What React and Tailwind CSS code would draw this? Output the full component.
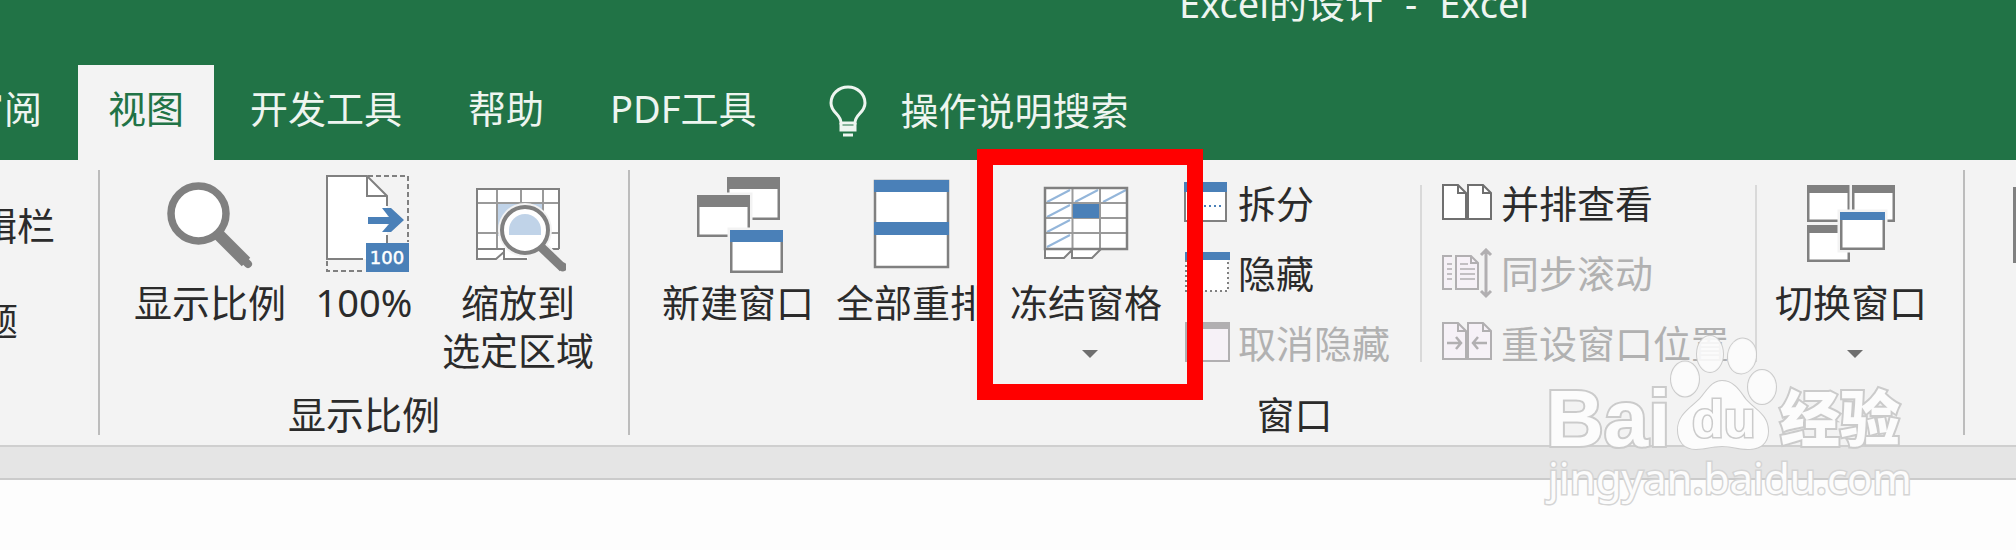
import React from 'react';

const GRAY = '#808080';
const BLUE = '#4a80b8';
const LIGHT = '#b1afb1';

// small window used in several of the ribbon icons
const Win = ({ x, y, w, h, head = 12, color = GRAY, line = 2.5 }) => (
  <g>
    <rect x={x - 2.5} y={y - 2.5} width={w + 5} height={h + 5} fill="#f3f3f3" />
    <rect x={x + line / 2} y={y + line / 2} width={w - line} height={h - line} fill="#fff" stroke={GRAY} strokeWidth={line} />
    <rect x={x} y={y} width={w} height={head} fill={color} />
  </g>
);

const BigIcon = ({ children }) => (
  <svg viewBox="0 0 96 108" className="h-[108px] w-24" fill="none" aria-hidden="true">{children}</svg>
);

const SmallIcon = ({ children, className = 'w-[46px]' }) => (
  <svg viewBox={className === 'w-[46px]' ? '0 0 46 54' : '0 0 52 54'} className={`h-[54px] shrink-0 ${className}`} fill="none" aria-hidden="true">
    {children}
  </svg>
);

const ZoomIcon = () => (
  <BigIcon>
    <path d="M56 64 84 92" stroke={GRAY} strokeWidth="12" />
    <path d="M80 88 86 94" stroke={GRAY} strokeWidth="8" strokeLinecap="round" />
    <circle cx="36.5" cy="43.5" r="27.5" fill="#fff" stroke={GRAY} strokeWidth="7.5" />
  </BigIcon>
);

const HundredIcon = () => (
  <BigIcon>
    <path d="M52 6H92V72M11 91V101H46" stroke={GRAY} strokeWidth="2" strokeDasharray="5 3" />
    <path d="M11 6H51L71 26V89H11Z" fill="#fff" />
    <path d="M47 89H11V6H51L71 26V36M71 65V73" stroke={GRAY} strokeWidth="2" />
    <path d="M51 6V26H71" stroke={GRAY} strokeWidth="2" />
    <path d="M52 47H73L66 38H75L88 50 75 62H66L73 54H52Z" fill={BLUE} />
    <rect x="50" y="73" width="43" height="29" fill={BLUE} />
    <text x="71" y="94" textAnchor="middle" fill="#fff" fontFamily="'DejaVu Sans', sans-serif" fontSize="18" stroke="#fff" strokeWidth="0.5">100</text>
  </BigIcon>
);

const ZoomSelectionIcon = () => (
  <BigIcon>
    <path d="M7 19H89V79H58V89H7Z" fill="#fff" />
    <path d="M27 34H72V66H27Z" fill="#c0d3e8" />
    <path d="M27 19V79M51 19V34M73 19V42M7 33H89M7 63H34M80 63H89" stroke="#9a9a9a" strokeWidth="2" />
    <path d="M89 79V19H7V89H26L34 82V79H7M34 82V89H57" stroke={GRAY} strokeWidth="2" />
    <path d="M89 79H82" stroke={GRAY} strokeWidth="2" />
    <path d="M71 77 93 98" stroke="#f3f3f3" strokeWidth="13" />
    <circle cx="55" cy="60" r="27" fill="#f3f3f3" />
    <circle cx="55" cy="60" r="23" fill="#fff" stroke={GRAY} strokeWidth="4" />
    <path d="M39 65V60a16 16 0 0 1 32 0v5Z" fill="#c0d3e8" />
    <path d="M71 77 93 98" stroke={GRAY} strokeWidth="9" />
    <circle cx="93" cy="97" r="4.5" fill={GRAY} />
  </BigIcon>
);

const NewWindowIcon = () => (
  <BigIcon>
    <Win x={37} y={7} w={53} h={43} />
    <Win x={7} y={25} w={53} h={42} />
    <Win x={40} y={60} w={53} h={43} color={BLUE} />
  </BigIcon>
);

const ArrangeIcon = () => (
  <BigIcon>
    <rect x="11" y="11" width="73" height="86" fill="#fff" stroke={GRAY} strokeWidth="2.5" />
    <path d="M10 10H85V22H10ZM10 52H85V65H10Z" fill={BLUE} />
  </BigIcon>
);

const FreezeIcon = () => (
  <BigIcon>
    <path d="M7 18H89V79H7Z" fill="#fff" />
    <path d="M7 79V88H26L34 80V88H54L63 79" fill="#fff" stroke={GRAY} strokeWidth="2" />
    <path d="M9 32 32 20M37 32 60 20M65 32 88 20M9 47 32 35M9 62 32 50M9 77 32 65" stroke="#94b6da" strokeWidth="2" />
    <path d="M34.5 18V79M62 18V79M7 33H89M7 48H89M7 63H89" stroke="#9a9a9a" strokeWidth="2" />
    <rect x="35" y="34" width="26" height="14" fill={BLUE} />
    <rect x="7" y="18" width="82" height="61" stroke={GRAY} strokeWidth="2.5" />
  </BigIcon>
);

const SwitchIcon = () => (
  <BigIcon>
    <Win x={4} y={15} w={43} h={37} head={8} />
    <Win x={49} y={15} w={43} h={37} head={8} />
    <Win x={4} y={55} w={43} h={37} head={8} />
    <Win x={37} y={42} w={45} h={38} head={8} color={BLUE} />
  </BigIcon>
);

const SplitIcon = () => (
  <SmallIcon>
    <rect x="1" y="5" width="41" height="38" fill="#fff" stroke={GRAY} strokeWidth="2" />
    <rect y="4" width="43" height="10" fill={BLUE} />
    <path d="M5 28H39" stroke={BLUE} strokeWidth="2" strokeDasharray="2 3" />
  </SmallIcon>
);

const HideIcon = () => (
  <SmallIcon>
    <rect x="2" y="6" width="42" height="37" fill="#fff" stroke={GRAY} strokeWidth="2" strokeDasharray="2 3" />
    <rect x="1" y="4" width="45" height="8" fill={BLUE} />
  </SmallIcon>
);

const UnhideIcon = () => (
  <SmallIcon>
    <rect x="2" y="5" width="43" height="38" fill="#f6f1f7" stroke={LIGHT} strokeWidth="2" />
    <rect x="1" y="4" width="45" height="7" fill={LIGHT} />
  </SmallIcon>
);

const SideBySideIcon = () => (
  <SmallIcon className="w-[52px]">
    <path d="M2 7H17L25 15V41H2ZM27 7H42L50 15V41H27Z" fill="#fff" stroke="#6f6f6f" strokeWidth="2" />
    <path d="M17 7V15H25M42 7V15H50" stroke="#6f6f6f" strokeWidth="2" />
  </SmallIcon>
);

const SyncScrollIcon = () => (
  <SmallIcon className="w-[52px]">
    <path d="M11 8H2V41H11M15 8H30L37 15V41H15Z" fill="#f6f1f7" stroke={LIGHT} strokeWidth="2" />
    <path d="M30 8V15H37" stroke={LIGHT} strokeWidth="2" />
    <path d="M6 16H11M6 21H11M6 26H11M6 31H11M19 16H27M19 21H34M19 26H34M19 31H34" stroke={LIGHT} strokeWidth="1.5" />
    <path d="M45 2V48M40 7 45 2 50 7M40 43 45 48 50 43" stroke={LIGHT} strokeWidth="3" />
  </SmallIcon>
);

const ResetIcon = () => (
  <SmallIcon className="w-[52px]">
    <path d="M2 5H17L25 13V41H2ZM27 5H42L50 13V41H27Z" fill="#f6f1f7" stroke={LIGHT} strokeWidth="2" />
    <path d="M17 5V13H25M42 5V13H50" stroke={LIGHT} strokeWidth="2" />
    <path d="M6 25H20M15 19 20 25 15 31M46 25H32M37 19 32 25 37 31" stroke={LIGHT} strokeWidth="2.5" />
  </SmallIcon>
);

const Bulb = () => (
  <svg viewBox="0 0 38 52" className="h-[52px] w-[38px]" fill="none" stroke="#eef5f0" strokeWidth="3" aria-hidden="true">
    <path d="M12 38C12 29 2 28 2 18a17 16 0 0 1 34 0C36 28 26 29 26 38Z" />
    <path d="M12 38V45H26V38M12 42H26M14 50H24" />
  </svg>
);

const BigButton = ({ icon, lines, arrow, className = 'w-[152px]' }) => (
  <button type="button" className={`flex shrink-0 flex-col items-center whitespace-nowrap ${className}`}>
    {icon}
    {lines.map((line) => (
      <span key={line} className="leading-[48px]">{line}</span>
    ))}
    {arrow && <span className="mt-6 ml-2 border-x-8 border-t-8 border-x-transparent border-t-[#6e6e6e]" />}
  </button>
);

const SmallButton = ({ icon, label, disabled }) => (
  <button type="button" disabled={disabled} className="flex h-[70px] items-center gap-2 whitespace-nowrap disabled:text-[#b1b1b1]">
    {icon}
    <span className="pb-1 leading-[48px]">{label}</span>
  </button>
);

const GroupLine = () => <div className="mb-[5px] w-[2px] shrink-0 bg-[#bcbcbc]" />;
const InnerLine = ({ className }) => <div className={`mt-[15px] h-[177px] w-[2px] shrink-0 bg-[#d9d9d9] ${className}`} />;

const tabs = ['审阅', '视图', '开发工具', '帮助', 'PDF工具'];

const Watermark = () => (
  <svg viewBox="0 0 380 180" className="pointer-events-none absolute top-[330px] right-[96px] h-[180px] w-[380px]" fill="#fcfcfc" stroke="#cbcbcb" strokeWidth="2" paintOrder="stroke" aria-hidden="true">
    <text x="6" y="116" fontSize="80" fontFamily="'Liberation Sans', Arial, sans-serif" fontWeight="700" strokeWidth="4">Bai</text>
    <g strokeWidth="2" fillOpacity="0.9">
      <ellipse cx="145" cy="49" rx="14" ry="17.5" />
      <ellipse cx="170" cy="24" rx="13" ry="18" />
      <ellipse cx="202" cy="26" rx="14" ry="17.5" transform="rotate(8 202 26)" />
      <ellipse cx="222" cy="57" rx="14" ry="17" />
    </g>
    <path d="M182 51c12 0 18 11 24 19 9 10 22 15 22 31 0 13-9 18-20 18-10 0-16-3-26-3s-17 3-26 3c-12 0-18-8-18-19 0-15 12-21 22-31 7-8 12-18 22-18Z" />
    <text x="152" y="107" fontSize="52" fontFamily="'Liberation Sans', Arial, sans-serif" fontWeight="700" strokeWidth="3">du</text>
    <text x="240" y="111" fontSize="60" fontFamily="'Noto Sans CJK SC', sans-serif" fontWeight="900" strokeWidth="4">经验</text>
    <text x="8" y="164" fontSize="42" fontFamily="'Noto Sans', sans-serif" strokeWidth="3" stroke="#d4d4d4">jingyan.baidu.com</text>
  </svg>
);

const App = () => {
  return (
    <div className="relative min-h-screen overflow-hidden bg-[#fdfdfd] font-['Noto_Sans','Noto_Sans_CJK_SC',sans-serif] text-[38px] text-[#2b2b2b]">
      <header className="flex h-[160px] flex-col justify-between bg-[#217346] text-[#eef5f0]">
        <div className="-mt-[21px] flex gap-[22px] pl-[1179px] leading-[48px] whitespace-nowrap">
          <span>Excel的设计</span>
          <span>-</span>
          <span>Excel</span>
        </div>
        <nav className="-ml-16 flex gap-[6px] whitespace-nowrap">
          {tabs.map((tab) => (
            <button
              key={tab}
              type="button"
              className={`h-[95px] px-[30px] pb-2 ${tab === '视图' ? 'bg-[#f3f3f3] text-[#217346]' : ''}`}
            >
              {tab}
            </button>
          ))}
          <button type="button" className="ml-9 flex h-[95px] items-center gap-[34px] pb-1">
            <Bulb />
            <span>操作说明搜索</span>
          </button>
        </nav>
      </header>

      <main className="flex border-b-2 border-[#cfcfcf] bg-[#f3f3f3] pt-[10px] pb-[5px]">
        <section className="flex w-[98px] shrink-0 flex-col gap-[47px] overflow-hidden pt-[31px] leading-[48px] whitespace-nowrap">
          <div className="flex w-[55px] justify-end">编辑栏</div>
          <div className="flex w-[18px] justify-end">标题</div>
        </section>
        <GroupLine />

        <section className="flex shrink-0 flex-col px-[34px]">
          <div className="flex h-[206px] items-start gap-[30px]">
            <BigButton icon={<ZoomIcon />} lines={['显示比例']} />
            <BigButton icon={<HundredIcon />} lines={['100%']} className="w-24" />
            <BigButton icon={<ZoomSelectionIcon />} lines={['缩放到', '选定区域']} />
          </div>
          <h2 className="mt-[14px] mb-[2px] text-center leading-[48px]">显示比例</h2>
        </section>
        <GroupLine />

        <section className="flex shrink-0 flex-col pr-9 pl-8">
          <div className="flex h-[206px] items-start">
            <div className="relative z-10 flex gap-[22px]">
              <BigButton icon={<NewWindowIcon />} lines={['新建窗口']} />
              <BigButton icon={<ArrangeIcon />} lines={['全部重排']} />
              <div className="relative">
                <BigButton icon={<FreezeIcon />} lines={['冻结窗格']} arrow />
                <div className="pointer-events-none absolute -top-[21px] -left-[33px] h-[251px] w-[226px] border-[16px] border-[#ff0000]" />
              </div>
            </div>
            <div className="ml-[22px]">
              <SmallButton icon={<SplitIcon />} label="拆分" />
              <SmallButton icon={<HideIcon />} label="隐藏" />
              <SmallButton icon={<UnhideIcon />} label="取消隐藏" disabled />
            </div>
            <InnerLine className="ml-[30px]" />
            <div className="ml-[19px]">
              <SmallButton icon={<SideBySideIcon />} label="并排查看" />
              <SmallButton icon={<SyncScrollIcon />} label="同步滚动" disabled />
              <SmallButton icon={<ResetIcon />} label="重设窗口位置" disabled />
            </div>
            <InnerLine className="mr-[18px] ml-[26px]" />
            <BigButton icon={<SwitchIcon />} lines={['切换窗口']} arrow />
          </div>
          <h2 className="mt-[14px] mb-[2px] text-center leading-[48px]">窗口</h2>
        </section>
        <GroupLine />

        <section className="flex flex-1 justify-end overflow-hidden pt-[17px]">
          <div className="h-[76px] w-[3px] bg-[#808080]" />
        </section>
      </main>
      <div className="h-[33px] border-b-2 border-[#cbcbcb] bg-[#e5e5e5]" />

      <Watermark />
    </div>
  );
};

export default App;
